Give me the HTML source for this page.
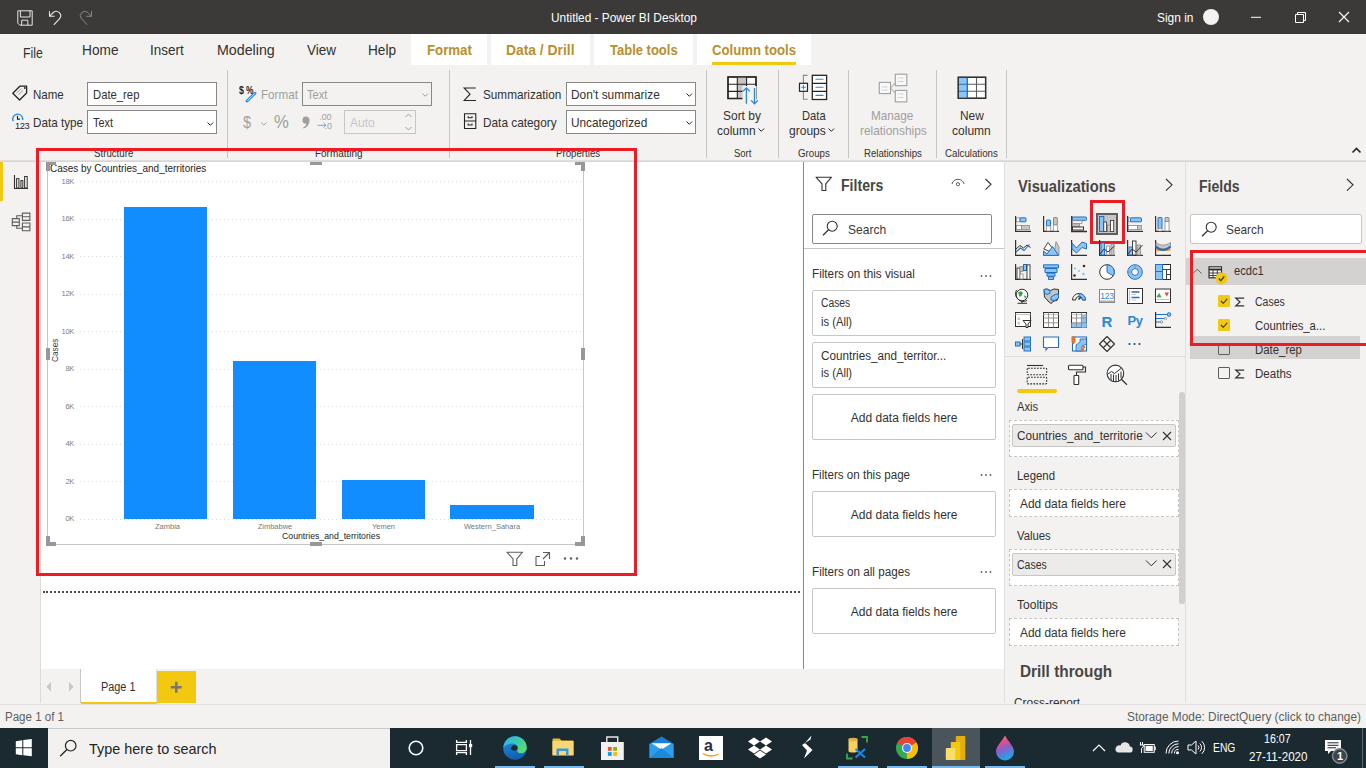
<!DOCTYPE html>
<html><head><meta charset="utf-8"><style>*{margin:0;padding:0;box-sizing:border-box}
html,body{width:1366px;height:768px;overflow:hidden;background:#fff;font-family:"Liberation Sans",sans-serif;color:#252423}
.a{position:absolute}
.t{position:absolute;white-space:nowrap;line-height:1;transform-origin:0 0}
svg{position:absolute;overflow:visible}
</style></head><body>
<div class="a" style="left:0px;top:0px;width:1366px;height:34px;background:#3b3a39;"></div>
<div class="a" style="left:0px;top:34px;width:1366px;height:127px;background:#f3f2f1;"></div>
<div class="a" style="left:411px;top:34px;width:76px;height:31px;background:#fff;"></div>
<div class="a" style="left:491px;top:34px;width:99px;height:31px;background:#fff;"></div>
<div class="a" style="left:594px;top:34px;width:99px;height:31px;background:#fff;"></div>
<div class="a" style="left:697px;top:34px;width:114px;height:31px;background:#fff;"></div>
<div class="a" style="left:712px;top:62px;width:84px;height:3px;background:#f2c811;"></div>
<div class="a" style="left:0px;top:160px;width:1366px;height:1px;background:repeating-linear-gradient(90deg,#dddbd9 0 2px,#e6e4e2 2px 3px);"></div>
<div class="a" style="left:0px;top:161px;width:1366px;height:1px;background:#d8d6d4;"></div>
<div class="a" style="left:0px;top:162px;width:40px;height:541px;background:#f3f2f1;"></div>
<div class="a" style="left:40px;top:162px;width:1px;height:542px;background:#dddbd9;"></div>
<div class="a" style="left:0px;top:162px;width:3px;height:39px;background:#f2c811;"></div>
<div class="a" style="left:41px;top:162px;width:762px;height:507px;background:#fff;"></div>
<div class="a" style="left:41px;top:669px;width:763px;height:34px;background:#f3f2f1;"></div>
<div class="a" style="left:0px;top:668px;width:1366px;height:0px;"></div>
<div class="a" style="left:803px;top:162px;width:201px;height:507px;background:#fff;"></div>
<div class="a" style="left:803px;top:162px;width:1px;height:507px;background:#8a8886;"></div>
<div class="a" style="left:804px;top:669px;width:200px;height:34px;background:#f3f2f1;"></div>
<div class="a" style="left:1004px;top:162px;width:181px;height:541px;background:#f3f2f1;"></div>
<div class="a" style="left:1004px;top:162px;width:1px;height:541px;background:#e1dfdd;"></div>
<div class="a" style="left:1185px;top:162px;width:181px;height:541px;background:#f3f2f1;"></div>
<div class="a" style="left:1185px;top:162px;width:1px;height:541px;background:#e1dfdd;"></div>
<div class="a" style="left:0px;top:703px;width:1366px;height:25px;background:#f3f2f1;"></div>
<div class="a" style="left:0px;top:704px;width:1366px;height:1px;background:#e1dfdd;"></div>
<div class="a" style="left:0px;top:728px;width:1366px;height:40px;background:#1b2a30;"></div>
<div class="a" style="left:48px;top:728px;width:342px;height:40px;background:#f2f1f0;"></div>
<div class="a" style="left:48px;top:728px;width:342px;height:1px;background:#c8c8c8;"></div>
<div class="t" style="left:550.5px;top:11.64px;font-size:12px;color:#ffffff;transform:scaleX(0.990);">Untitled - Power BI Desktop</div>
<div class="t" style="left:1156.5px;top:11.64px;font-size:12px;color:#ffffff;transform:scaleX(0.994);">Sign in</div>
<div class="a" style="left:1203px;top:9px;width:16px;height:16px;border-radius:50%;background:#f3f2f1"></div>
<div class="t" style="left:22.8px;top:45.95px;font-size:14px;color:#323130;transform:scaleX(0.878);">File</div>
<div class="t" style="left:81.5px;top:43.15px;font-size:14px;color:#323130;transform:scaleX(0.977);">Home</div>
<div class="t" style="left:150.0px;top:43.15px;font-size:14px;color:#323130;transform:scaleX(0.962);">Insert</div>
<div class="t" style="left:216.6px;top:43.15px;font-size:14px;color:#323130;transform:scaleX(1.017);">Modeling</div>
<div class="t" style="left:307.0px;top:43.15px;font-size:14px;color:#323130;transform:scaleX(0.964);">View</div>
<div class="t" style="left:367.5px;top:43.15px;font-size:14px;color:#323130;transform:scaleX(0.972);">Help</div>
<div class="t" style="left:426.6px;top:43.15px;font-size:14px;color:#b8902e;font-weight:700;transform:scaleX(0.946);">Format</div>
<div class="t" style="left:506.0px;top:43.15px;font-size:14px;color:#b8902e;font-weight:700;transform:scaleX(0.989);">Data / Drill</div>
<div class="t" style="left:609.5px;top:43.15px;font-size:14px;color:#b8902e;font-weight:700;transform:scaleX(0.928);">Table tools</div>
<div class="t" style="left:712.0px;top:43.15px;font-size:14px;color:#b8902e;font-weight:700;transform:scaleX(0.939);">Column tools</div>
<div class="a" style="left:227px;top:70px;width:1px;height:88px;background:#c8c6c4;"></div>
<div class="a" style="left:449px;top:70px;width:1px;height:88px;background:#c8c6c4;"></div>
<div class="a" style="left:706px;top:70px;width:1px;height:88px;background:#c8c6c4;"></div>
<div class="a" style="left:778px;top:70px;width:1px;height:88px;background:#c8c6c4;"></div>
<div class="a" style="left:848px;top:70px;width:1px;height:88px;background:#c8c6c4;"></div>
<div class="a" style="left:936px;top:70px;width:1px;height:88px;background:#c8c6c4;"></div>
<div class="a" style="left:1006px;top:70px;width:1px;height:88px;background:#c8c6c4;"></div>
<div class="t" style="left:32.5px;top:87.90px;font-size:13px;color:#323130;transform:scaleX(0.888);">Name</div>
<div class="t" style="left:32.5px;top:116.40px;font-size:13px;color:#323130;transform:scaleX(0.900);">Data type</div>
<div class="a" style="left:87px;top:82px;width:130px;height:24px;background:#fff;border:1px solid #8a8886"></div>
<div class="t" style="left:92.8px;top:87.90px;font-size:13px;color:#323130;transform:scaleX(0.868);">Date_rep</div>
<div class="a" style="left:87px;top:110px;width:130px;height:24px;background:#fff;border:1px solid #8a8886"></div>
<div class="t" style="left:93.1px;top:116.40px;font-size:13px;color:#323130;transform:scaleX(0.835);">Text</div>
<div class="t" style="left:260.8px;top:87.90px;font-size:13px;color:#a19f9d;transform:scaleX(0.896);">Format</div>
<div class="a" style="left:302px;top:82px;width:130px;height:24px;border:1px solid #8a8886"></div>
<div class="t" style="left:307.3px;top:87.90px;font-size:13px;color:#a19f9d;transform:scaleX(0.851);">Text</div>
<div class="a" style="left:344px;top:110px;width:72px;height:24px;border:1px solid #c8c6c4"></div>
<div class="t" style="left:349.5px;top:116.40px;font-size:13px;color:#c8c6c4;transform:scaleX(0.927);">Auto</div>
<div class="t" style="left:482.6px;top:87.80px;font-size:13px;color:#323130;transform:scaleX(0.903);">Summarization</div>
<div class="t" style="left:482.6px;top:116.10px;font-size:13px;color:#323130;transform:scaleX(0.909);">Data category</div>
<div class="a" style="left:566px;top:82px;width:130px;height:24px;background:#fff;border:1px solid #8a8886"></div>
<div class="t" style="left:571.2px;top:87.80px;font-size:13px;color:#323130;transform:scaleX(0.914);">Don't summarize</div>
<div class="a" style="left:566px;top:110px;width:130px;height:24px;background:#fff;border:1px solid #8a8886"></div>
<div class="t" style="left:570.8px;top:116.10px;font-size:13px;color:#323130;transform:scaleX(0.909);">Uncategorized</div>
<div class="t" style="left:723.4px;top:108.50px;font-size:13px;color:#323130;transform:scaleX(0.920);">Sort by</div>
<div class="t" style="left:717.0px;top:124.40px;font-size:13px;color:#323130;transform:scaleX(0.921);">column</div>
<div class="t" style="left:801.7px;top:108.50px;font-size:13px;color:#323130;transform:scaleX(0.859);">Data</div>
<div class="t" style="left:789.2px;top:124.40px;font-size:13px;color:#323130;transform:scaleX(0.926);">groups</div>
<div class="t" style="left:871.4px;top:108.50px;font-size:13px;color:#a19f9d;transform:scaleX(0.902);">Manage</div>
<div class="t" style="left:859.6px;top:124.40px;font-size:13px;color:#a19f9d;transform:scaleX(0.914);">relationships</div>
<div class="t" style="left:959.9px;top:108.50px;font-size:13px;color:#323130;transform:scaleX(0.915);">New</div>
<div class="t" style="left:952.4px;top:124.40px;font-size:13px;color:#323130;transform:scaleX(0.926);">column</div>
<div class="t" style="left:94.0px;top:148.53px;font-size:10px;color:#323130;transform:scaleX(0.969);">Structure</div>
<div class="t" style="left:314.9px;top:148.53px;font-size:10px;color:#323130;transform:scaleX(0.994);">Formatting</div>
<div class="t" style="left:555.8px;top:148.53px;font-size:10px;color:#323130;transform:scaleX(0.968);">Properties</div>
<div class="t" style="left:733.6px;top:148.53px;font-size:10px;color:#323130;transform:scaleX(0.949);">Sort</div>
<div class="t" style="left:797.6px;top:148.53px;font-size:10px;color:#323130;transform:scaleX(0.970);">Groups</div>
<div class="t" style="left:863.9px;top:148.53px;font-size:10px;color:#323130;transform:scaleX(0.963);">Relationships</div>
<div class="t" style="left:945.0px;top:148.53px;font-size:10px;color:#323130;transform:scaleX(0.969);">Calculations</div>
<div class="t" style="left:50.4px;top:164.28px;font-size:10.3px;color:#252423;transform:scaleX(0.968);">Cases by Countries_and_territories</div>
<div class="a" style="left:80px;top:181px;width:502px;height:1px;background:repeating-linear-gradient(90deg,#dedede 0 1px,transparent 1px 4px);"></div>
<div class="t" style="left:40px;top:177.9px;width:34px;text-align:right;font-size:7.5px;color:#808080;letter-spacing:-0.3px">18K</div>
<div class="a" style="left:80px;top:219px;width:502px;height:1px;background:repeating-linear-gradient(90deg,#dedede 0 1px,transparent 1px 4px);"></div>
<div class="t" style="left:40px;top:215.4px;width:34px;text-align:right;font-size:7.5px;color:#808080;letter-spacing:-0.3px">16K</div>
<div class="a" style="left:80px;top:256px;width:502px;height:1px;background:repeating-linear-gradient(90deg,#dedede 0 1px,transparent 1px 4px);"></div>
<div class="t" style="left:40px;top:252.9px;width:34px;text-align:right;font-size:7.5px;color:#808080;letter-spacing:-0.3px">14K</div>
<div class="a" style="left:80px;top:294px;width:502px;height:1px;background:repeating-linear-gradient(90deg,#dedede 0 1px,transparent 1px 4px);"></div>
<div class="t" style="left:40px;top:290.4px;width:34px;text-align:right;font-size:7.5px;color:#808080;letter-spacing:-0.3px">12K</div>
<div class="a" style="left:80px;top:331px;width:502px;height:1px;background:repeating-linear-gradient(90deg,#dedede 0 1px,transparent 1px 4px);"></div>
<div class="t" style="left:40px;top:327.9px;width:34px;text-align:right;font-size:7.5px;color:#808080;letter-spacing:-0.3px">10K</div>
<div class="a" style="left:80px;top:369px;width:502px;height:1px;background:repeating-linear-gradient(90deg,#dedede 0 1px,transparent 1px 4px);"></div>
<div class="t" style="left:40px;top:365.4px;width:34px;text-align:right;font-size:7.5px;color:#808080;letter-spacing:-0.3px">8K</div>
<div class="a" style="left:80px;top:406px;width:502px;height:1px;background:repeating-linear-gradient(90deg,#dedede 0 1px,transparent 1px 4px);"></div>
<div class="t" style="left:40px;top:402.9px;width:34px;text-align:right;font-size:7.5px;color:#808080;letter-spacing:-0.3px">6K</div>
<div class="a" style="left:80px;top:444px;width:502px;height:1px;background:repeating-linear-gradient(90deg,#dedede 0 1px,transparent 1px 4px);"></div>
<div class="t" style="left:40px;top:440.4px;width:34px;text-align:right;font-size:7.5px;color:#808080;letter-spacing:-0.3px">4K</div>
<div class="a" style="left:80px;top:481px;width:502px;height:1px;background:repeating-linear-gradient(90deg,#dedede 0 1px,transparent 1px 4px);"></div>
<div class="t" style="left:40px;top:477.9px;width:34px;text-align:right;font-size:7.5px;color:#808080;letter-spacing:-0.3px">2K</div>
<div class="a" style="left:80px;top:519px;width:502px;height:1px;background:repeating-linear-gradient(90deg,#dedede 0 1px,transparent 1px 4px);"></div>
<div class="t" style="left:40px;top:515.4px;width:34px;text-align:right;font-size:7.5px;color:#808080;letter-spacing:-0.3px">0K</div>
<div class="a" style="left:124px;top:207px;width:83px;height:312px;background:#118dff;"></div>
<div class="a" style="left:233px;top:361px;width:83px;height:158px;background:#118dff;"></div>
<div class="a" style="left:342px;top:480px;width:83px;height:39px;background:#118dff;"></div>
<div class="a" style="left:450px;top:505px;width:84px;height:14px;background:#118dff;"></div>
<div class="t" style="left:117.5px;top:523px;width:100px;text-align:center;font-size:7.5px;color:#777">Zambia</div>
<div class="t" style="left:225px;top:523px;width:100px;text-align:center;font-size:7.5px;color:#777">Zimbabwe</div>
<div class="t" style="left:333.5px;top:523px;width:100px;text-align:center;font-size:7.5px;color:#777">Yemen</div>
<div class="t" style="left:442px;top:523px;width:100px;text-align:center;font-size:7.5px;color:#777">Western_Sahara</div>
<div class="t" style="left:281.6px;top:532.38px;font-size:9px;color:#252423;transform:scaleX(0.970);">Countries_and_territories</div>
<div class="t" style="left:51px;top:361.5px;font-size:9px;color:#3b3a39;transform:rotate(-90deg) scaleX(0.92);transform-origin:0 0">Cases</div>
<div class="a" style="left:47px;top:162px;width:1px;height:383px;background:#c8c6c4;"></div>
<div class="a" style="left:583px;top:162px;width:1px;height:383px;background:#c8c6c4;"></div>
<div class="a" style="left:47px;top:544px;width:537px;height:1px;background:#c8c6c4;"></div>
<div class="a" style="left:46px;top:162px;width:10px;height:3px;background:#999897;"></div>
<div class="a" style="left:46px;top:162px;width:4px;height:9px;background:#999897;"></div>
<div class="a" style="left:575px;top:162px;width:10px;height:3px;background:#999897;"></div>
<div class="a" style="left:581px;top:162px;width:4px;height:9px;background:#999897;"></div>
<div class="a" style="left:46px;top:542px;width:10px;height:4px;background:#999897;"></div>
<div class="a" style="left:46px;top:536px;width:4px;height:10px;background:#999897;"></div>
<div class="a" style="left:575px;top:542px;width:10px;height:4px;background:#999897;"></div>
<div class="a" style="left:581px;top:536px;width:4px;height:10px;background:#999897;"></div>
<div class="a" style="left:310px;top:162px;width:12px;height:3px;background:#999897;"></div>
<div class="a" style="left:310px;top:542px;width:12px;height:4px;background:#999897;"></div>
<div class="a" style="left:46px;top:348px;width:4px;height:12px;background:#999897;"></div>
<div class="a" style="left:581px;top:348px;width:4px;height:12px;background:#999897;"></div>
<div class="a" style="left:43px;top:591px;width:757px;height:2px;border-top:2px dotted #4a4948"></div>
<div class="a" style="left:36px;top:148px;width:601px;height:428px;border:3px solid #ed1c24"></div>
<div class="a" style="left:81px;top:669px;width:75px;height:34px;background:#fff;"></div>
<div class="a" style="left:80px;top:669px;width:1px;height:34px;background:#c8c6c4;"></div>
<div class="a" style="left:81px;top:702px;width:76px;height:2px;background:#f2c811;"></div>
<div class="a" style="left:156px;top:669px;width:1px;height:33px;background:#e1dfdd;"></div>
<div class="t" style="left:101.0px;top:681.24px;font-size:12px;color:#323130;transform:scaleX(0.907);">Page 1</div>
<div class="a" style="left:157px;top:671px;width:39px;height:32px;background:#f2c811;"></div>
<div class="t" style="left:5.0px;top:711.34px;font-size:12px;color:#605e5c;transform:scaleX(0.961);">Page 1 of 1</div>
<div class="t" style="left:1126.8px;top:711.04px;font-size:12px;color:#605e5c;transform:scaleX(0.988);">Storage Mode: DirectQuery (click to change)</div>
<div class="t" style="left:840.7px;top:177.76px;font-size:16px;color:#484644;font-weight:700;transform:scaleX(0.881);">Filters</div>
<div class="a" style="left:812px;top:214px;width:180px;height:30px;background:#fff;border:1px solid #8a8886;border-radius:2px"></div>
<div class="t" style="left:848.2px;top:222.80px;font-size:13px;color:#3b3a39;transform:scaleX(0.927);">Search</div>
<div class="a" style="left:804px;top:248px;width:200px;height:1px;background:#c8c6c4;"></div>
<div class="t" style="left:812.4px;top:267.64px;font-size:12px;color:#323130;transform:scaleX(0.976);">Filters on this visual</div>
<div class="a" style="left:812px;top:290px;width:184px;height:46px;background:#fff;border:1px solid #c8c6c4;border-radius:2px"></div>
<div class="a" style="left:812px;top:342px;width:184px;height:46px;background:#fff;border:1px solid #c8c6c4;border-radius:2px"></div>
<div class="a" style="left:812px;top:394px;width:184px;height:46px;background:#fff;border:1px solid #c8c6c4;border-radius:2px"></div>
<div class="t" style="left:821.4px;top:297.34px;font-size:12px;color:#323130;transform:scaleX(0.861);">Cases</div>
<div class="t" style="left:821.4px;top:315.84px;font-size:12px;color:#323130;transform:scaleX(0.933);">is (All)</div>
<div class="t" style="left:821.4px;top:349.64px;font-size:12px;color:#323130;transform:scaleX(0.973);">Countries_and_territor...</div>
<div class="t" style="left:821.4px;top:367.44px;font-size:12px;color:#323130;transform:scaleX(0.933);">is (All)</div>
<div class="t" style="left:850.8px;top:411.94px;font-size:12px;color:#323130;">Add data fields here</div>
<div class="t" style="left:812.4px;top:468.84px;font-size:12px;color:#323130;transform:scaleX(0.967);">Filters on this page</div>
<div class="a" style="left:812px;top:491px;width:184px;height:46px;background:#fff;border:1px solid #c8c6c4;border-radius:2px"></div>
<div class="t" style="left:850.8px;top:508.94px;font-size:12px;color:#323130;">Add data fields here</div>
<div class="t" style="left:812.4px;top:565.84px;font-size:12px;color:#323130;transform:scaleX(0.973);">Filters on all pages</div>
<div class="a" style="left:812px;top:588px;width:184px;height:46px;background:#fff;border:1px solid #c8c6c4;border-radius:2px"></div>
<div class="t" style="left:850.8px;top:605.94px;font-size:12px;color:#323130;">Add data fields here</div>
<div class="t" style="left:1017.8px;top:179.26px;font-size:16px;color:#484644;font-weight:700;transform:scaleX(0.919);">Visualizations</div>
<div class="a" style="left:1004px;top:356px;width:181px;height:1px;background:#e1dfdd;"></div>
<div class="a" style="left:1017px;top:389px;width:40px;height:4px;background:#f2c811;border-radius:2px"></div>
<div class="t" style="left:1017.3px;top:401.24px;font-size:12px;color:#323130;transform:scaleX(0.926);">Axis</div>
<div class="a" style="left:1009px;top:420px;width:170px;height:37px;background:#fff;border:1px dashed #c8c6c4"></div>
<div class="a" style="left:1012px;top:424px;width:164px;height:23px;background:#edebe9;border:1px solid #c8c6c4;border-radius:2px"></div>
<div class="t" style="left:1017.3px;top:430.24px;font-size:12px;color:#323130;transform:scaleX(0.976);">Countries_and_territorie</div>
<div class="t" style="left:1017.3px;top:469.84px;font-size:12px;color:#323130;transform:scaleX(0.949);">Legend</div>
<div class="a" style="left:1009px;top:489px;width:170px;height:28px;background:#fff;border:1px dashed #c8c6c4"></div>
<div class="t" style="left:1020.3px;top:498.24px;font-size:12px;color:#323130;transform:scaleX(0.992);">Add data fields here</div>
<div class="t" style="left:1017.3px;top:529.74px;font-size:12px;color:#323130;transform:scaleX(0.941);">Values</div>
<div class="a" style="left:1009px;top:549px;width:170px;height:37px;background:#fff;border:1px dashed #c8c6c4"></div>
<div class="a" style="left:1012px;top:553px;width:164px;height:23px;background:#edebe9;border:1px solid #c8c6c4;border-radius:2px"></div>
<div class="t" style="left:1017.3px;top:558.94px;font-size:12px;color:#323130;transform:scaleX(0.873);">Cases</div>
<div class="t" style="left:1017.3px;top:599.04px;font-size:12px;color:#323130;transform:scaleX(1.005);">Tooltips</div>
<div class="a" style="left:1009px;top:618px;width:170px;height:28px;background:#fff;border:1px dashed #c8c6c4"></div>
<div class="t" style="left:1020.3px;top:626.74px;font-size:12px;color:#323130;transform:scaleX(0.992);">Add data fields here</div>
<div class="t" style="left:1019.8px;top:663.96px;font-size:16px;color:#484644;font-weight:700;transform:scaleX(0.960);">Drill through</div>
<div class="t" style="left:1014.4px;top:696.84px;font-size:12px;color:#323130;transform:scaleX(0.990);clip-path:inset(0 0 4.9px 0);">Cross-report</div>
<div class="a" style="left:1179px;top:392px;width:6px;height:212px;background:#d2d0ce;border-radius:3px 3px 2px 2px"></div>
<div class="t" style="left:1198.8px;top:179.46px;font-size:16px;color:#484644;font-weight:700;transform:scaleX(0.878);">Fields</div>
<div class="a" style="left:1190px;top:214px;width:172px;height:30px;background:#fff;border:1px solid #c8c6c4;border-radius:2px"></div>
<div class="t" style="left:1226.3px;top:223.40px;font-size:13px;color:#3b3a39;transform:scaleX(0.910);">Search</div>
<div class="a" style="left:1186px;top:258px;width:180px;height:27px;background:#d4d2d0;"></div>
<div class="t" style="left:1234.0px;top:264.84px;font-size:12px;color:#323130;transform:scaleX(0.930);">ecdc1</div>
<div class="a" style="left:1190px;top:336px;width:170px;height:23px;background:#d4d2d0;"></div>
<div class="t" style="left:1255.0px;top:296.14px;font-size:12px;color:#323130;transform:scaleX(0.873);">Cases</div>
<div class="t" style="left:1255.0px;top:320.14px;font-size:12px;color:#323130;transform:scaleX(0.941);">Countries_a...</div>
<div class="t" style="left:1255.0px;top:343.64px;font-size:12px;color:#323130;transform:scaleX(0.950);">Date_rep</div>
<div class="t" style="left:1255.0px;top:367.64px;font-size:12px;color:#323130;transform:scaleX(0.962);">Deaths</div>
<div class="a" style="left:1218px;top:295px;width:12px;height:12px;background:#f2c811;border-radius:1px"></div>
<div class="a" style="left:1218px;top:319px;width:12px;height:12px;background:#f2c811;border-radius:1px"></div>
<div class="a" style="left:1218px;top:343px;width:12px;height:12px;border:1px solid #605e5c;border-radius:1px"></div>
<div class="a" style="left:1218px;top:367px;width:12px;height:12px;border:1px solid #605e5c;border-radius:1px"></div>
<div class="a" style="left:1190px;top:250px;width:176px;height:96px;border:3px solid #ed1c24;border-right:none"></div>
<div class="a" style="left:1090px;top:200px;width:35px;height:44px;border:3px solid #ed1c24"></div>
<div class="t" style="left:88.5px;top:741.30px;font-size:15px;color:#252423;transform:scaleX(0.962);">Type here to search</div>
<div class="t" style="left:1213.2px;top:741.64px;font-size:12px;color:#ffffff;transform:scaleX(0.861);">ENG</div>
<div class="t" style="left:1264.4px;top:732.64px;font-size:12px;color:#ffffff;transform:scaleX(0.886);">16:07</div>
<div class="t" style="left:1248.7px;top:750.84px;font-size:12px;color:#ffffff;transform:scaleX(0.967);">27-11-2020</div>
<div class="a" style="left:932px;top:728px;width:48px;height:40px;background:#4a555b;"></div>
<div class="a" style="left:495px;top:766px;width:40px;height:2px;background:#76b9ed;"></div>
<div class="a" style="left:544px;top:766px;width:40px;height:2px;background:#76b9ed;"></div>
<div class="a" style="left:838px;top:766px;width:40px;height:2px;background:#76b9ed;"></div>
<div class="a" style="left:887px;top:766px;width:40px;height:2px;background:#76b9ed;"></div>
<div class="a" style="left:932px;top:766px;width:48px;height:2px;background:#76b9ed;"></div>
<div class="a" style="left:985px;top:766px;width:40px;height:2px;background:#76b9ed;"></div>
<svg style="left:17px;top:10px;" width="16" height="16" viewBox="0 0 16 16"><path d="M1.2 0.8H15.2V15.2H2.8L0.8 13.2V0.8Z M3.4 0.8V7H13V0.8 M4.7 15.2V10.2H10.8V15.2" fill="none" stroke="#e6e6e6" stroke-width="1"/></svg>
<svg style="left:48px;top:10px;" width="16" height="16" viewBox="0 0 16 16"><path d="M1.5 1.2V6.3H6.6 M1.5 6.3L5.3 2.5A4.4 4.4 0 0 1 11.6 8.6L5.8 14.8" fill="none" stroke="#e6e6e6" stroke-width="1.1"/></svg>
<svg style="left:77px;top:10px;" width="16" height="16" viewBox="0 0 16 16"><path d="M14.5 1.2V6.3H9.4 M14.5 6.3L10.7 2.5A4.4 4.4 0 0 0 4.4 8.6L10.2 14.8" fill="none" stroke="#8a8886" stroke-width="1"/></svg>
<svg style="left:1250px;top:10px;" width="14" height="14" viewBox="0 0 14 14"><path d="M1 7.3H11" stroke="#fff" stroke-width="1"/></svg>
<svg style="left:1294px;top:11px;" width="14" height="14" viewBox="0 0 14 14"><path d="M1.5 3.5H9.5V11.5H1.5Z M3.5 3.5V1.5H11.5V9.5H9.5" fill="none" stroke="#fff" stroke-width="1"/></svg>
<svg style="left:1338px;top:11px;" width="12" height="12" viewBox="0 0 12 12"><path d="M1 1L11 11M11 1L1 11" stroke="#fff" stroke-width="1.1"/></svg>
<svg style="left:11px;top:85px;" width="17" height="17" viewBox="0 0 17 17"><path d="M1.8 8.2L8.8 1.2H15.6V8L8.6 15Z" fill="none" stroke="#252423" stroke-width="1.3" stroke-linejoin="round"/><circle cx="13.8" cy="3" r="0.9" fill="#252423"/><path d="M5.5 8.2L10.5 3.6M7.2 9.9L12.2 5.3" stroke="#8a8886" stroke-width="0.8"/></svg>
<svg style="left:11px;top:112px;" width="20" height="20" viewBox="0 0 20 20"><path d="M2.2 9.3A5 5 0 1 1 11.6 8" fill="none" stroke="#2b88d8" stroke-width="1.4"/><path d="M6.5 3.7V7.2H9" fill="none" stroke="#252423" stroke-width="1.2"/></svg>
<div class="t" style="left:15px;top:122px;font-size:9.3px;color:#252423;letter-spacing:-0.4px;font-weight:400">123</div>
<div class="t" style="left:239.3px;top:85px;font-size:11px;font-weight:700;color:#252423;transform:scaleX(0.8);transform-origin:0 0">$</div>
<div class="t" style="left:246.2px;top:85.3px;font-size:10.5px;font-weight:700;color:#252423;transform:scaleX(0.8);transform-origin:0 0">%</div>
<svg style="left:245px;top:91px;" width="12" height="12" viewBox="0 0 12 12"><path d="M2 10L10 2.2" stroke="#2b88d8" stroke-width="2.8" stroke-linecap="round"/><path d="M2.2 9.8L9.8 2.4" stroke="#d8eafc" stroke-width="0.9"/></svg>
<div class="t" style="left:243px;top:113.5px;font-size:17px;color:#a19f9d;transform:scaleX(0.85);transform-origin:0 0">$</div>
<svg style="left:260px;top:121px;" width="8" height="6" viewBox="0 0 8 6"><path d="M1.2 1.5L3.8 4.1L6.4 1.5" fill="none" stroke="#a19f9d" stroke-width="1"/></svg>
<div class="t" style="left:274px;top:112.8px;font-size:18.5px;color:#a19f9d;transform:scaleX(0.9);transform-origin:0 0">%</div>
<svg style="left:302px;top:116px;" width="10" height="14" viewBox="0 0 10 14"><path d="M4 0.5A3.5 3.5 0 0 1 7.5 4.5C7.5 8.5 5 11.5 1.5 12.5L1 11.8C3 10.5 4 9.5 4.3 7.8A3.6 3.6 0 0 1 4 0.5Z" fill="#a19f9d"/></svg>
<div class="t" style="left:319.5px;top:113.3px;font-size:9px;color:#a19f9d;letter-spacing:-0.2px">.00</div>
<div class="t" style="left:324.8px;top:121.5px;font-size:9px;color:#a19f9d;letter-spacing:-0.2px">.0</div>
<svg style="left:317px;top:122px;" width="11" height="6" viewBox="0 0 11 6"><path d="M0.5 3.3H9M6.5 1L9 3.3L6.5 5.6" fill="none" stroke="#6fa8dc" stroke-width="1"/></svg>
<svg style="left:206px;top:121px;" width="9" height="6" viewBox="0 0 9 6"><path d="M1.5 1.5L4.3 4.3L7.1 1.5" fill="none" stroke="#252423" stroke-width="1"/></svg>
<svg style="left:421px;top:92px;" width="9" height="6" viewBox="0 0 9 6"><path d="M1.5 1.5L4.3 4.3L7.1 1.5" fill="none" stroke="#a19f9d" stroke-width="1"/></svg>
<svg style="left:685px;top:92px;" width="9" height="6" viewBox="0 0 9 6"><path d="M1.5 1.5L4.3 4.3L7.1 1.5" fill="none" stroke="#252423" stroke-width="1"/></svg>
<svg style="left:685px;top:120px;" width="9" height="6" viewBox="0 0 9 6"><path d="M1.5 1.5L4.3 4.3L7.1 1.5" fill="none" stroke="#252423" stroke-width="1"/></svg>
<svg style="left:404px;top:112px;" width="9" height="20" viewBox="0 0 9 20"><path d="M1.5 5L4.5 2L7.5 5M1.5 15L4.5 18L7.5 15" fill="none" stroke="#a19f9d" stroke-width="1"/></svg>
<svg style="left:463px;top:87px;" width="14" height="15" viewBox="0 0 14 15"><path d="M12.8 1H1.2L7 7.2L1.2 13.5H13" fill="none" stroke="#252423" stroke-width="1.1" stroke-linejoin="miter"/></svg>
<svg style="left:463px;top:113px;" width="14" height="17" viewBox="0 0 14 17"><path d="M1.5 0.8H12.8V15.5H1.5Z M1.5 8H12.8 M5.2 3.3V4.8H9V3.3 M5.2 10.5V12H9V10.5" fill="none" stroke="#252423" stroke-width="1.1"/></svg>
<svg style="left:727px;top:76px;" width="32" height="29" viewBox="0 0 32 29"><rect x="1" y="1" width="28" height="21.5" fill="#fff" stroke="#252423" stroke-width="1.3"/>
<rect x="10.3" y="1" width="9.3" height="21.5" fill="#c8c6c4"/>
<path d="M10.3 1V22.5M19.6 1V22.5M1 8.2H29M1 15.4H29" stroke="#252423" stroke-width="1.1"/>
<rect x="1" y="1" width="28" height="21.5" fill="none" stroke="#252423" stroke-width="1.3"/>
<rect x="15.5" y="10" width="14" height="18" fill="#f3f2f1"/>
<path d="M19.4 12V27.8M16 15.3L19.4 11.9L22.8 15.3 M27.5 12V27.8M24.1 24.4L27.5 27.8L30.9 24.4" fill="none" stroke="#2b88d8" stroke-width="1.3"/></svg>
<svg style="left:757px;top:127px;" width="9" height="6" viewBox="0 0 9 6"><path d="M1.5 1.5L4.3 4.3L7.1 1.5" fill="none" stroke="#252423" stroke-width="1"/></svg>
<svg style="left:798px;top:74px;" width="31" height="27" viewBox="0 0 31 27"><path d="M9.6 1.4H5.4V25.2H9.6" fill="none" stroke="#8a8886" stroke-width="1.1"/>
<rect x="1.5" y="9.3" width="8" height="8" fill="#fff" stroke="#252423" stroke-width="1.2"/>
<path d="M5.5 11V15.6M3.2 13.3H7.8" stroke="#2b88d8" stroke-width="1.1"/>
<rect x="14.3" y="1.3" width="14.3" height="24.2" fill="#fff" stroke="#252423" stroke-width="1.3"/>
<path d="M14.3 9.4H28.6M14.3 17.4H28.6" stroke="#252423" stroke-width="1.1"/>
<path d="M17.5 5.3H25.5M17.5 13.3H25.5M17.5 21.4H25.5" stroke="#2b88d8" stroke-width="1.1"/></svg>
<svg style="left:827px;top:127px;" width="9" height="6" viewBox="0 0 9 6"><path d="M1.5 1.5L4.3 4.3L7.1 1.5" fill="none" stroke="#252423" stroke-width="1"/></svg>
<svg style="left:878px;top:73px;" width="30" height="30" viewBox="0 0 30 30"><rect x="1.3" y="9.4" width="11.2" height="11.2" fill="#f8f8f8" stroke="#a19f9d" stroke-width="1.1"/>
<rect x="17.3" y="1.2" width="11.5" height="11.5" fill="#f8f8f8" stroke="#a19f9d" stroke-width="1.1"/>
<rect x="17.3" y="17.4" width="11.5" height="11.5" fill="#f8f8f8" stroke="#a19f9d" stroke-width="1.1"/>
<path d="M12.5 15L17.3 10M12.5 15L17.3 20" stroke="#a19f9d" stroke-width="1"/>
<path d="M4 14H10M4 17H10M20 5H26M20 8.5H26M20 21H26M20 24.5H26" stroke="#a0b8cc" stroke-width="0.8" stroke-dasharray="1 0.5"/></svg>
<svg style="left:957px;top:76px;" width="30" height="24" viewBox="0 0 30 24"><rect x="1.3" y="1.3" width="27.3" height="21" fill="#fff" stroke="#323130" stroke-width="1.3"/>
<rect x="1.3" y="1.3" width="9" height="21" fill="#8cc4f5"/>
<path d="M10.3 1.3V22.3" stroke="#1f6fc5" stroke-width="1.3"/>
<path d="M1.3 8.3H10.3M1.3 15.3H10.3" stroke="#1f6fc5" stroke-width="1.1"/>
<path d="M10.3 8.3H28.6M10.3 15.3H28.6M19.5 1.3V22.3" stroke="#605e5c" stroke-width="1.1"/>
<rect x="1.3" y="1.3" width="27.3" height="21" fill="none" stroke="#323130" stroke-width="1.3"/></svg>
<svg style="left:1351px;top:146px;" width="12" height="8" viewBox="0 0 12 8"><path d="M1.5 6.5L5.5 2.5L9.5 6.5" fill="none" stroke="#252423" stroke-width="1.6"/></svg>
<svg style="left:1015px;top:216px;" width="16" height="16" viewBox="0 0 16 16"><path d="M0.6 0V15.4H16" fill="none" stroke="#323130" stroke-width="1.2"/><rect x="1.5" y="1.8" width="3.5" height="4" fill="#fff" stroke="#8a8886" stroke-width="0.8"/><rect x="5" y="1.8" width="6" height="4" rx="0.8" fill="#8cc4f5" stroke="#1f6fc5" stroke-width="1"/><rect x="1.5" y="9.5" width="5" height="4" fill="#fff" stroke="#8a8886" stroke-width="0.8"/><rect x="6.5" y="9.5" width="8" height="4" fill="#c8c6c4" stroke="#8a8886" stroke-width="0.8"/></svg>
<svg style="left:1043px;top:216px;" width="16" height="16" viewBox="0 0 16 16"><path d="M0.6 0V15.4H16" fill="none" stroke="#323130" stroke-width="1.2"/><rect x="3.5" y="4" width="4" height="6" rx="0.6" fill="#8cc4f5" stroke="#1f6fc5" stroke-width="1"/><rect x="3.5" y="10" width="4" height="5" fill="#fff" stroke="#8a8886" stroke-width="0.7"/><rect x="10.5" y="1.5" width="3.8" height="7.5" rx="0.6" fill="#c8c6c4" stroke="#8a8886" stroke-width="1"/><rect x="10.5" y="9" width="3.8" height="6" fill="#fff" stroke="#8a8886" stroke-width="0.7"/></svg>
<svg style="left:1071px;top:216px;" width="16" height="16" viewBox="0 0 16 16"><path d="M0.8 0V15.4H16" fill="none" stroke="#323130" stroke-width="1.5"/><rect x="1.5" y="1" width="14" height="3.3" rx="0.8" fill="#8cc4f5" stroke="#1f6fc5" stroke-width="1"/><rect x="1.5" y="4.8" width="9.5" height="2.5" fill="#fff" stroke="#8a8886" stroke-width="0.8"/><rect x="1.5" y="7.8" width="7" height="2.5" fill="#c8c6c4" stroke="#8a8886" stroke-width="0.8"/><rect x="1.5" y="11" width="11" height="3" fill="#fff" stroke="#323130" stroke-width="1"/></svg>
<svg style="left:1127px;top:216px;" width="16" height="16" viewBox="0 0 16 16"><path d="M0.6 0V15.4H16" fill="none" stroke="#323130" stroke-width="1.2"/><rect x="1.5" y="1.8" width="2" height="4" fill="#fff" stroke="#8a8886" stroke-width="0.8"/><rect x="3.5" y="1.8" width="11" height="4" rx="0.8" fill="#8cc4f5" stroke="#1f6fc5" stroke-width="1"/><rect x="1.5" y="9.5" width="9" height="4" fill="#fff" stroke="#8a8886" stroke-width="0.8"/><rect x="10.5" y="9.5" width="4" height="4" fill="#c8c6c4" stroke="#8a8886" stroke-width="0.8"/></svg>
<svg style="left:1155px;top:216px;" width="16" height="16" viewBox="0 0 16 16"><path d="M0.6 0V15.4H16" fill="none" stroke="#323130" stroke-width="1.2"/><rect x="3" y="1.5" width="4" height="11" rx="0.6" fill="#8cc4f5" stroke="#1f6fc5" stroke-width="1"/><rect x="3" y="12.5" width="4" height="2.5" fill="#fff" stroke="#8a8886" stroke-width="0.7"/><rect x="10" y="1.5" width="4" height="4" rx="0.6" fill="#c8c6c4" stroke="#8a8886" stroke-width="1"/><rect x="10" y="5.5" width="4" height="9.5" fill="#fff" stroke="#8a8886" stroke-width="0.8"/></svg>
<svg style="left:1015px;top:240px;" width="16" height="16" viewBox="0 0 16 16"><path d="M0.6 0V15.4H16" fill="none" stroke="#323130" stroke-width="1.2"/><path d="M1 9L5 5.5L8.5 8L12 5L15.5 7.5" fill="none" stroke="#323130" stroke-width="1"/><path d="M1 12L5.5 8L9 10.5L14.5 4.5" fill="none" stroke="#1f6fc5" stroke-width="1.1"/></svg>
<svg style="left:1043px;top:240px;" width="16" height="16" viewBox="0 0 16 16"><path d="M0.5 15.4H16" stroke="#1f6fc5" stroke-width="1"/><path d="M11 15.4L13 1.5L16 7V15.4Z" fill="#c8c6c4" stroke="#8a8886" stroke-width="0.8"/><path d="M0.8 9L5 2.5L10 9L7 11.5Z" fill="#fff" stroke="#323130" stroke-width="0.9"/><path d="M0.5 15.4V11L4 14L9.5 6.5L15.5 15.4Z" fill="#8cc4f5" stroke="#1f6fc5" stroke-width="1"/></svg>
<svg style="left:1071px;top:240px;" width="16" height="16" viewBox="0 0 16 16"><path d="M0.6 0V15.4H16" fill="none" stroke="#323130" stroke-width="1.2"/><path d="M1 3L5.5 8L11 2L15.5 3.5V9L11 7.5L5.5 13L1 9Z" fill="#8cc4f5" stroke="#1f6fc5" stroke-width="1"/></svg>
<svg style="left:1099px;top:240px;" width="16" height="16" viewBox="0 0 16 16"><path d="M0.6 0V15.4H16" fill="none" stroke="#323130" stroke-width="1.2"/><rect x="2" y="3" width="3.5" height="12" fill="#8cc4f5" stroke="#1f6fc5" stroke-width="0.9"/><rect x="7.5" y="6" width="3" height="9" fill="#fff" stroke="#8a8886" stroke-width="0.8"/><rect x="12" y="4" width="3" height="11" fill="#c8c6c4" stroke="#8a8886" stroke-width="0.8"/><path d="M1 14L5 9L9 12L15.5 6" fill="none" stroke="#323130" stroke-width="1"/></svg>
<svg style="left:1127px;top:240px;" width="16" height="16" viewBox="0 0 16 16"><path d="M0.6 0V15.4H16" fill="none" stroke="#323130" stroke-width="1.2"/><rect x="2" y="7" width="3.5" height="8" fill="#8cc4f5" stroke="#1f6fc5" stroke-width="0.9"/><rect x="5.5" y="1" width="3.5" height="14" fill="#fff" stroke="#323130" stroke-width="0.9"/><rect x="10" y="5" width="3.5" height="10" fill="#c8c6c4" stroke="#8a8886" stroke-width="0.8"/><path d="M1 14L5 9L9 12L15.5 5" fill="none" stroke="#323130" stroke-width="1"/></svg>
<svg style="left:1155px;top:240px;" width="16" height="16" viewBox="0 0 16 16"><path d="M0.6 0V15.4H16" fill="none" stroke="#323130" stroke-width="1.2"/><path d="M1 2.5C5 6 11 6 15.5 2.5V7C11 10 5 10 1 7Z" fill="#c8c6c4" stroke="#8a8886" stroke-width="0.8"/><path d="M1 8H15.5V11H1Z" fill="#f7a24b"/><path d="M1 6.5C5 11 11 11 15.5 6.5" fill="none" stroke="#1f6fc5" stroke-width="2.2"/></svg>
<svg style="left:1015px;top:264px;" width="16" height="16" viewBox="0 0 16 16"><path d="M0.6 0V15.4H16" fill="none" stroke="#323130" stroke-width="1.2"/><rect x="2" y="4" width="3" height="11" fill="#fff" stroke="#323130" stroke-width="0.9"/><rect x="5" y="2.5" width="3" height="5" fill="#c8c6c4" stroke="#8a8886" stroke-width="0.8"/><rect x="8.5" y="0.5" width="3" height="6" fill="#8cc4f5" stroke="#1f6fc5" stroke-width="1"/><rect x="12" y="0.8" width="3" height="14.5" fill="#fff" stroke="#323130" stroke-width="0.9"/><rect x="5" y="10" width="3" height="5" fill="#fff" stroke="#8a8886" stroke-width="0.8"/></svg>
<svg style="left:1043px;top:264px;" width="16" height="16" viewBox="0 0 16 16"><path d="M0.5 0.8H15.5V3.8H0.5Z M2 4.5H14V8.5H2Z M4 9.2H12V12.2H4Z M5.5 12.8H10.5V15.5H5.5Z" fill="#8cc4f5" stroke="#1f6fc5" stroke-width="1"/></svg>
<svg style="left:1071px;top:264px;" width="16" height="16" viewBox="0 0 16 16"><path d="M0.6 0V15.4H16" fill="none" stroke="#323130" stroke-width="1.2"/><circle cx="13" cy="2" r="1.3" fill="#323130"/><circle cx="4" cy="4.5" r="1.1" fill="#8cc4f5"/><circle cx="8" cy="7" r="1.1" fill="#8cc4f5"/><circle cx="12.5" cy="10" r="1.3" fill="#8cc4f5"/><circle cx="3.5" cy="11.5" r="1.3" fill="#323130"/></svg>
<svg style="left:1099px;top:264px;" width="16" height="16" viewBox="0 0 16 16"><circle cx="8" cy="8" r="7.3" fill="#fff" stroke="#323130" stroke-width="1"/><path d="M8 0.7A7.3 7.3 0 0 1 14.2 11.9L8 8Z" fill="#8cc4f5" stroke="#1f6fc5" stroke-width="1"/></svg>
<svg style="left:1127px;top:264px;" width="16" height="16" viewBox="0 0 16 16"><circle cx="8" cy="8" r="5.3" fill="none" stroke="#8cc4f5" stroke-width="3.6"/><circle cx="8" cy="8" r="7.3" fill="none" stroke="#1f6fc5" stroke-width="1"/><circle cx="8" cy="8" r="3.4" fill="#fff" stroke="#1f6fc5" stroke-width="1"/><path d="M8 0.7V4.6M0.7 8H4.6" stroke="#8a8886" stroke-width="0.8"/></svg>
<svg style="left:1155px;top:264px;" width="16" height="16" viewBox="0 0 16 16"><rect x="0.5" y="0.5" width="15" height="15" fill="#fff" stroke="#323130" stroke-width="1"/><rect x="0.5" y="0.5" width="7" height="7" fill="#8cc4f5" stroke="#1f6fc5" stroke-width="1"/><rect x="0.5" y="7.5" width="7" height="8" fill="#8cc4f5" stroke="#1f6fc5" stroke-width="1"/><path d="M7.5 5.5H15.5M11.5 5.5V15.5M11.5 10.5H15.5" stroke="#323130" stroke-width="0.9"/></svg>
<svg style="left:1015px;top:288px;" width="16" height="16" viewBox="0 0 16 16"><circle cx="7" cy="7" r="5.8" fill="#fff" stroke="#323130" stroke-width="1"/><path d="M3 4.5L6 3L8 5L6.5 8L4.5 9ZM9 7.5L11.5 8L10 11Z" fill="#3aa64a"/><path d="M1.5 2A7.8 7.8 0 0 0 12 12.5M7 13V15.3M2.5 15.3H12" fill="none" stroke="#323130" stroke-width="1"/></svg>
<svg style="left:1043px;top:288px;" width="16" height="16" viewBox="0 0 16 16"><path d="M1 1.5L4 1L7.5 2.5L11 1L15.5 1.5V9L14 12.5L11 13L8 15.5L5 13L1.5 9Z" fill="#c8c6c4" stroke="#323130" stroke-width="1"/><path d="M1 1.5L4 1L7 3V5.5L4 6.5L1.5 5Z M8 9L12 6.5L15.5 6V10L12 12.5L8 12Z" fill="#8cc4f5" stroke="#1f6fc5" stroke-width="1"/></svg>
<svg style="left:1071px;top:288px;" width="16" height="16" viewBox="0 0 16 16"><path d="M1.5 12A6.5 6.5 0 0 1 14.5 12H11.5A3.5 3.5 0 0 0 4.5 12Z" fill="#fff" stroke="#323130" stroke-width="1"/><path d="M8 5.5A6.5 6.5 0 0 1 14.5 12H11.5A3.5 3.5 0 0 0 8 8.5Z" fill="#8cc4f5" stroke="#1f6fc5" stroke-width="1"/><path d="M7.5 11.5L10 9" stroke="#323130" stroke-width="1.6"/></svg>
<svg style="left:1099px;top:288px;" width="16" height="16" viewBox="0 0 16 16"><rect x="0.5" y="1.5" width="15" height="13" fill="#fff" stroke="#8a8886" stroke-width="1"/><path d="M0.5 13.2H15.5" stroke="#8a8886" stroke-width="1"/><text x="8" y="10.8" font-size="8.5" text-anchor="middle" fill="#2b88d8" font-family="Liberation Sans" letter-spacing="-0.3">123</text></svg>
<svg style="left:1127px;top:288px;" width="16" height="16" viewBox="0 0 16 16"><rect x="0.5" y="0.5" width="15" height="15" fill="#fff" stroke="#323130" stroke-width="1"/><path d="M2.5 2V14" stroke="#c8c6c4" stroke-width="1.3"/><path d="M4.5 4H12.5M4.5 9.5H12.5" stroke="#1f6fc5" stroke-width="1.3"/><path d="M4.5 6.5H9M4.5 12H9" stroke="#c8c6c4" stroke-width="1"/></svg>
<svg style="left:1155px;top:288px;" width="16" height="16" viewBox="0 0 16 16"><rect x="0.5" y="1" width="15" height="13.5" fill="#fff" stroke="#323130" stroke-width="1"/><path d="M2 9L4 5.5L6 9Z" fill="#5bb75b" stroke="#2e7d32" stroke-width="0.6"/><path d="M9.5 4.5H14L11.8 8.5Z" fill="#e74c3c"/><path d="M1.5 11.5H14.5" stroke="#c8c6c4" stroke-width="1"/></svg>
<svg style="left:1015px;top:312px;" width="16" height="16" viewBox="0 0 16 16"><rect x="0.5" y="0.5" width="15" height="14" fill="#fff" stroke="#323130" stroke-width="1"/><path d="M0.5 2.5H15.5" stroke="#c8c6c4" stroke-width="1.2"/><rect x="2.5" y="5.5" width="2.5" height="2.5" fill="#c8c6c4"/><rect x="2.5" y="10" width="2.5" height="2.5" fill="#c8c6c4"/><path d="M8 8.5H16L13 12V15.5H11V12Z" fill="#fff" stroke="#323130" stroke-width="1"/></svg>
<svg style="left:1043px;top:312px;" width="16" height="16" viewBox="0 0 16 16"><rect x="0.5" y="0.5" width="15" height="15" fill="#fff" stroke="#323130" stroke-width="1"/><path d="M0.5 2.5H15.5" stroke="#c8c6c4" stroke-width="1.2"/><path d="M5.5 0.5V15.5M10.5 0.5V15.5M0.5 6H15.5M0.5 10.8H15.5" stroke="#8a8886" stroke-width="0.9"/></svg>
<svg style="left:1071px;top:312px;" width="16" height="16" viewBox="0 0 16 16"><rect x="0.5" y="0.5" width="15" height="15" fill="#fff" stroke="#323130" stroke-width="1"/><rect x="11" y="3" width="4.5" height="12.5" fill="#8cc4f5"/><rect x="0.5" y="11" width="15" height="4.5" fill="#8cc4f5"/><path d="M0.5 2.5H15.5" stroke="#c8c6c4" stroke-width="1.2"/><path d="M5.5 0.5V15.5M10.5 0.5V15.5M0.5 6H15.5M0.5 10.8H15.5" stroke="#8a8886" stroke-width="0.9"/></svg>
<svg style="left:1099px;top:312px;" width="16" height="16" viewBox="0 0 16 16"><text x="8" y="15" font-size="15" font-weight="700" text-anchor="middle" fill="#2b88d8" font-family="Liberation Sans">R</text></svg>
<svg style="left:1127px;top:312px;" width="16" height="16" viewBox="0 0 16 16"><text x="8" y="13" font-size="13" font-weight="700" text-anchor="middle" fill="#2b88d8" font-family="Liberation Sans" letter-spacing="-0.5">Py</text></svg>
<svg style="left:1155px;top:312px;" width="16" height="16" viewBox="0 0 16 16"><path d="M0.6 0V15.4H16" fill="none" stroke="#323130" stroke-width="1.2"/><path d="M1 2.5H13M1 6.5H10M1 10H6" stroke="#1f6fc5" stroke-width="1"/><circle cx="14" cy="2.5" r="1.8" fill="#8cc4f5" stroke="#1f6fc5" stroke-width="1"/><circle cx="10.5" cy="6.5" r="1.2" fill="#fff" stroke="#8a8886" stroke-width="0.9"/><circle cx="6.5" cy="10" r="1.2" fill="#fff" stroke="#8a8886" stroke-width="0.9"/></svg>
<svg style="left:1015px;top:336px;" width="16" height="16" viewBox="0 0 16 16"><rect x="0.5" y="6" width="4.5" height="4" fill="#8cc4f5" stroke="#1f6fc5" stroke-width="1"/><path d="M5 8H7.5M7.5 3V13" stroke="#323130" stroke-width="1"/><rect x="9" y="1" width="6.5" height="4" fill="#8cc4f5" stroke="#1f6fc5" stroke-width="1"/><rect x="9" y="6" width="6.5" height="4" fill="#8cc4f5" stroke="#1f6fc5" stroke-width="1"/><rect x="9" y="11" width="6.5" height="4" fill="#8cc4f5" stroke="#1f6fc5" stroke-width="1"/></svg>
<svg style="left:1043px;top:336px;" width="16" height="16" viewBox="0 0 16 16"><path d="M0.5 1H15.5V11.5H5L3 14V11.5H0.5Z" fill="#fff" stroke="#1f6fc5" stroke-width="1.1"/></svg>
<svg style="left:1071px;top:336px;" width="16" height="16" viewBox="0 0 16 16"><rect x="1.5" y="1" width="14" height="14" fill="#fff" stroke="#1f6fc5" stroke-width="1.1"/><path d="M5 15V9L9 6V3H15.5V8L11 10V15Z" fill="#8cc4f5" stroke="#1f6fc5" stroke-width="0.9"/><path d="M0.5 0.5H4.5V6L2.5 8.5L0.5 6Z" fill="#e8722a"/><circle cx="13" cy="11" r="1.3" fill="#e8722a"/><circle cx="11.5" cy="13.8" r="1.8" fill="#e8722a"/></svg>
<svg style="left:1099px;top:336px;" width="16" height="16" viewBox="0 0 16 16"><path d="M8 0.5L15.5 8L8 15.5L0.5 8Z M4.5 4.5L11.5 11.5M11.5 4.5L4.5 11.5" fill="none" stroke="#323130" stroke-width="1.1" stroke-linejoin="round"/></svg>
<svg style="left:1127px;top:336px;" width="16" height="16" viewBox="0 0 16 16"><circle cx="2.5" cy="8" r="1.1" fill="#1a4f8a"/><circle cx="7.5" cy="8" r="1.1" fill="#1a4f8a"/><circle cx="12.5" cy="8" r="1.1" fill="#1a4f8a"/></svg>
<svg style="left:1096px;top:213px;" width="22" height="22" viewBox="0 0 22 22"><rect x="1" y="1" width="20" height="20" fill="#c8c6c4" stroke="#605e5c" stroke-width="2"/><path d="M3.6 3V18.4H19" fill="none" stroke="#8a8886" stroke-width="0.8" stroke-dasharray="1 0.6"/><rect x="3.5" y="3.5" width="4.3" height="15" fill="#8cc4f5" stroke="#1f6fc5" stroke-width="1"/><rect x="7.8" y="9" width="2.8" height="9.5" fill="#fff" stroke="#323130" stroke-width="0.8"/><rect x="11.5" y="12" width="3" height="6.5" fill="#c8c6c4" stroke="#8a8886" stroke-width="0.8"/><rect x="14.5" y="7.5" width="3.2" height="11" fill="#fff" stroke="#323130" stroke-width="0.8"/></svg>
<svg style="left:1026px;top:364px;" width="22" height="22" viewBox="0 0 22 22"><path d="M1 1.5H17" stroke="#323130" stroke-width="1.1"/><rect x="1.2" y="4.3" width="19.5" height="6.5" rx="0.8" fill="none" stroke="#323130" stroke-width="1.1" stroke-dasharray="1.8 1.2"/><rect x="1.2" y="13.3" width="19.5" height="6.6" rx="0.8" fill="none" stroke="#323130" stroke-width="1.1" stroke-dasharray="1.8 1.2"/></svg>
<svg style="left:1067px;top:364px;" width="20" height="22" viewBox="0 0 20 22"><rect x="1.5" y="1.2" width="14.5" height="4.5" rx="1" fill="#fff" stroke="#323130" stroke-width="1.1"/><path d="M16 3H18.5V8H9.5V11.5" fill="none" stroke="#323130" stroke-width="1.1"/><rect x="7" y="11.5" width="4.7" height="9" rx="0.5" fill="#fff" stroke="#323130" stroke-width="1.1"/></svg>
<svg style="left:1105px;top:363px;" width="24" height="24" viewBox="0 0 24 24"><circle cx="10.4" cy="10.4" r="8.3" fill="#fff" stroke="#323130" stroke-width="1.1"/><path d="M3 11L6.5 8.5L9.5 10.5L16 5.5" fill="none" stroke="#323130" stroke-width="1"/><path d="M6 11V17M8.5 11.5V18.5M11 12V18.5M13.5 10.5V17.5M16 8.5V15" stroke="#323130" stroke-width="1"/><path d="M16.3 16.3L22 21.8" stroke="#323130" stroke-width="1.2"/></svg>
<svg style="left:1164px;top:178px;" width="10" height="14" viewBox="0 0 10 14"><path d="M2 1L8 6.8L2 12.6" fill="none" stroke="#323130" stroke-width="1.1"/></svg>
<svg style="left:1145px;top:431px;" width="13" height="9" viewBox="0 0 13 9"><path d="M1 1.5L6.3 6.8L11.6 1.5" fill="none" stroke="#323130" stroke-width="1"/></svg>
<svg style="left:1162px;top:431px;" width="10" height="10" viewBox="0 0 10 10"><path d="M1 1L9 9M9 1L1 9" stroke="#323130" stroke-width="1.1"/></svg>
<svg style="left:1145px;top:559px;" width="13" height="9" viewBox="0 0 13 9"><path d="M1 1.5L6.3 6.8L11.6 1.5" fill="none" stroke="#323130" stroke-width="1"/></svg>
<svg style="left:1162px;top:559px;" width="10" height="10" viewBox="0 0 10 10"><path d="M1 1L9 9M9 1L1 9" stroke="#323130" stroke-width="1.1"/></svg>
<svg style="left:815px;top:176px;" width="18" height="16" viewBox="0 0 18 16"><path d="M1 1.2H16.5L10.8 7.8V14.5H7V7.8Z" fill="none" stroke="#323130" stroke-width="1.1" stroke-linejoin="round"/></svg>
<svg style="left:951px;top:178px;" width="14" height="9" viewBox="0 0 14 9"><path d="M1 6A6.2 6.2 0 0 1 13 6" fill="none" stroke="#605e5c" stroke-width="1"/><circle cx="7" cy="6.2" r="1.6" fill="none" stroke="#605e5c" stroke-width="1"/></svg>
<svg style="left:984px;top:178px;" width="9" height="13" viewBox="0 0 9 13"><path d="M1.5 1L7 6.3L1.5 11.6" fill="none" stroke="#323130" stroke-width="1.1"/></svg>
<svg style="left:822px;top:220px;" width="18" height="18" viewBox="0 0 18 18"><circle cx="10.2" cy="6.2" r="5" fill="none" stroke="#323130" stroke-width="1.1"/><path d="M6.6 9.8L1 15.3" stroke="#323130" stroke-width="1.2"/></svg>
<svg style="left:1201px;top:221px;" width="18" height="18" viewBox="0 0 18 18"><circle cx="10.2" cy="6.2" r="5" fill="none" stroke="#323130" stroke-width="1.1"/><path d="M6.6 9.8L1 15.3" stroke="#323130" stroke-width="1.2"/></svg>
<svg style="left:980px;top:274px;" width="13" height="4" viewBox="0 0 13 4"><circle cx="1.5" cy="2" r="0.9" fill="#605e5c"/><circle cx="6" cy="2" r="0.9" fill="#605e5c"/><circle cx="10.5" cy="2" r="0.9" fill="#605e5c"/></svg>
<svg style="left:980px;top:473px;" width="13" height="4" viewBox="0 0 13 4"><circle cx="1.5" cy="2" r="0.9" fill="#605e5c"/><circle cx="6" cy="2" r="0.9" fill="#605e5c"/><circle cx="10.5" cy="2" r="0.9" fill="#605e5c"/></svg>
<svg style="left:980px;top:570px;" width="13" height="4" viewBox="0 0 13 4"><circle cx="1.5" cy="2" r="0.9" fill="#605e5c"/><circle cx="6" cy="2" r="0.9" fill="#605e5c"/><circle cx="10.5" cy="2" r="0.9" fill="#605e5c"/></svg>
<svg style="left:1345px;top:178px;" width="10" height="14" viewBox="0 0 10 14"><path d="M2 1L8 6.8L2 12.6" fill="none" stroke="#323130" stroke-width="1.1"/></svg>
<svg style="left:1192px;top:266px;" width="12" height="10" viewBox="0 0 12 10"><path d="M1 7.5L5.3 3.2L9.6 7.5" fill="none" stroke="#605e5c" stroke-width="1"/></svg>
<svg style="left:1208px;top:266px;" width="16" height="14" viewBox="0 0 16 14"><rect x="1" y="0.8" width="12.5" height="11" fill="#fff" stroke="#323130" stroke-width="1.2"/><path d="M1 3.5H13.5" stroke="#323130" stroke-width="2"/><path d="M1 7H13.5M1 9.5H13.5M5 3.5V12M9.3 3.5V12" stroke="#323130" stroke-width="0.9"/></svg>
<svg style="left:1215px;top:272px;" width="13" height="13" viewBox="0 0 13 13"><circle cx="6.5" cy="6.5" r="6" fill="#f2c811"/><path d="M3.8 6.5L5.8 8.6L9.3 4.5" fill="none" stroke="#323130" stroke-width="1.2"/></svg>
<svg style="left:1218px;top:295px;" width="12" height="12" viewBox="0 0 12 12"><path d="M3 6L5.2 8.3L9.2 3.8" fill="none" stroke="#323130" stroke-width="1.1"/></svg>
<svg style="left:1218px;top:319px;" width="12" height="12" viewBox="0 0 12 12"><path d="M3 6L5.2 8.3L9.2 3.8" fill="none" stroke="#323130" stroke-width="1.1"/></svg>
<svg style="left:1235px;top:297px;" width="10" height="10" viewBox="0 0 10 10"><path d="M9.2 1.2H0.8L5 5L0.8 8.8H9.2" fill="none" stroke="#323130" stroke-width="1.2" stroke-linejoin="miter"/></svg>
<svg style="left:1235px;top:369px;" width="10" height="10" viewBox="0 0 10 10"><path d="M9.2 1.2H0.8L5 5L0.8 8.8H9.2" fill="none" stroke="#323130" stroke-width="1.2" stroke-linejoin="miter"/></svg>
<svg style="left:13px;top:174px;" width="16" height="16" viewBox="0 0 16 16"><path d="M1.5 1V14.5H15" fill="none" stroke="#323130" stroke-width="1.1"/><rect x="3.6" y="4.6" width="2.3" height="9.4" fill="none" stroke="#323130" stroke-width="1"/><rect x="7.9" y="6.6" width="1.9" height="7.4" fill="none" stroke="#323130" stroke-width="1"/><rect x="11.6" y="2.5" width="2.6" height="11.5" fill="none" stroke="#323130" stroke-width="1"/></svg>
<svg style="left:11px;top:212px;" width="20" height="20" viewBox="0 0 20 20"><path d="M1.3 6.6H8.3V13.6H1.3Z M1.3 10.1H8.3 M11.4 1.1H18.9V8.4H11.4Z M11.4 4.75H18.9 M11.4 11H18.9V18.8H11.4Z M11.4 14.9H18.9 M5.7 6.6V3.7H11.4 M5.7 13.6V16.2H11.4" fill="none" stroke="#605e5c" stroke-width="1.1"/></svg>
<svg style="left:506px;top:551px;" width="18" height="16" viewBox="0 0 18 16"><path d="M1 1.2H16.5L10.8 7.8V14.5H7V7.8Z" fill="none" stroke="#605e5c" stroke-width="1.1" stroke-linejoin="round"/></svg>
<svg style="left:535px;top:551px;" width="16" height="16" viewBox="0 0 16 16"><path d="M1 5.5V14.5H9.5V10 M1 5.5H5 M8 1.5H14.5V8 M14.5 1.5L8 8" fill="none" stroke="#605e5c" stroke-width="1.1"/></svg>
<svg style="left:563px;top:556px;" width="16" height="5" viewBox="0 0 16 5"><circle cx="2" cy="2.5" r="1.2" fill="#605e5c"/><circle cx="8" cy="2.5" r="1.2" fill="#605e5c"/><circle cx="14" cy="2.5" r="1.2" fill="#605e5c"/></svg>
<svg style="left:45px;top:681px;" width="8" height="12" viewBox="0 0 8 12"><path d="M6 1L1.5 5.8L6 10.6Z" fill="#c8c6c4"/></svg>
<svg style="left:67px;top:681px;" width="8" height="12" viewBox="0 0 8 12"><path d="M2 1L6.5 5.8L2 10.6Z" fill="#c8c6c4"/></svg>
<svg style="left:170px;top:681px;" width="13" height="13" viewBox="0 0 13 13"><path d="M6.3 0.8V11.8M0.8 6.3H11.8" stroke="#797775" stroke-width="2.6"/></svg>
<svg style="left:15px;top:739px;" width="18" height="18" viewBox="0 0 18 18"><path d="M0.8 2.3L7.3 1.3V8.3H0.8Z M8.3 1.1L16.8 0V8.3H8.3Z M0.8 9.3H7.3V16.3L0.8 15.3Z M8.3 9.3H16.8V17.3L8.3 16.2Z" fill="#fff"/></svg>
<svg style="left:59px;top:739px;" width="19" height="19" viewBox="0 0 19 19"><circle cx="11.7" cy="6.7" r="5.3" fill="none" stroke="#252423" stroke-width="1.2"/><path d="M7.9 10.5L1.2 17.2" stroke="#252423" stroke-width="1.3"/></svg>
<svg style="left:407px;top:739px;" width="18" height="18" viewBox="0 0 18 18"><circle cx="9" cy="9" r="6.8" fill="none" stroke="#fff" stroke-width="1.6"/></svg>
<svg style="left:455px;top:739px;" width="18" height="18" viewBox="0 0 18 18"><path d="M1.6 1V3.4H11.4V1 M1.6 16V13.6H11.4V16 M1.6 5.6H11.4V11.6H1.6Z M15.5 1V16" fill="none" stroke="#fff" stroke-width="1.3"/><rect x="14" y="5" width="3.2" height="3.2" fill="#fff"/></svg>
<svg style="left:503px;top:736px;" width="24" height="24" viewBox="0 0 24 24"><defs><linearGradient id="eg1" x1="0" y1="0" x2="1" y2="0.6"><stop offset="0" stop-color="#2fb4f0"/><stop offset="0.55" stop-color="#36c8b4"/><stop offset="1" stop-color="#5fd96a"/></linearGradient>
<linearGradient id="eg2" x1="0" y1="0" x2="0.4" y2="1"><stop offset="0" stop-color="#2a8fe8"/><stop offset="1" stop-color="#0f5fb0"/></linearGradient></defs>
<circle cx="12" cy="12" r="11.8" fill="url(#eg2)"/>
<path d="M0.5 11.5C1 5 6 0.3 12 0.3C18.5 0.3 23.7 5.3 23.7 11.5C23.7 15 21.5 17.3 18 17.3C15 17.3 13.5 15.5 14.5 13.5C15.5 11 14 7.5 10 7.5C5 7.5 1.5 10 0.5 11.5Z" fill="url(#eg1)"/>
<path d="M8 13C8 9.5 11 8.5 13 9.5C15 10.5 15 13 13.5 14C12 15 9.5 15 8 13Z" fill="#1c2a30"/>
<path d="M23.5 13C22 20 16 24 10 23.5C15 23 19 20.5 20.5 17.2C21.7 16.5 23 15 23.5 13Z" fill="#1266c2"/></svg>
<svg style="left:552px;top:738px;" width="22" height="19" viewBox="0 0 22 19"><path d="M0.5 2.5V1.5C0.5 1 1 0.5 1.5 0.5H7.5L9.5 2.5H20.5C21 2.5 21.5 3 21.5 3.5V17H0.5Z" fill="#e8b73b"/><rect x="0.5" y="3" width="21" height="14.5" fill="#f8d775"/><path d="M4.5 18V10.5H16.5V18H14V13H7V18Z" fill="#3a96dd"/></svg>
<svg style="left:600px;top:736px;" width="24" height="24" viewBox="0 0 24 24"><path d="M6.8 6V1H17.7V6" fill="none" stroke="#e8e6e4" stroke-width="1.4"/><rect x="1" y="6" width="22.8" height="18" fill="#f3f2f1"/><rect x="7.9" y="11" width="3.8" height="3.8" fill="#f25022"/><rect x="13.2" y="11" width="3.8" height="3.8" fill="#7fba00"/><rect x="7.9" y="16.1" width="3.8" height="3.8" fill="#00a4ef"/><rect x="13.2" y="16.1" width="3.8" height="3.8" fill="#ffb900"/></svg>
<svg style="left:649px;top:736px;" width="25" height="22" viewBox="0 0 25 22"><path d="M0.5 7.8L12.5 0.5L24.5 7.8V22H0.5Z" fill="#1a7fd4"/><path d="M0.5 7.8H24.5V22H0.5Z" fill="#2aa0ea"/><path d="M2.5 7.3H22.5L12.5 13.5Z" fill="#fff"/><path d="M0.5 22L12.5 12L24.5 22Z" fill="#1e88da"/></svg>
<div class="a" style="left:699px;top:735.5px;width:24px;height:24px;background:#fff;"></div>
<div class="t" style="left:704px;top:738px;font-size:16px;font-weight:700;color:#232f3e">a</div>
<svg style="left:701px;top:752px;" width="20" height="6" viewBox="0 0 20 6"><path d="M2 1.5C7 4.5 13 4.5 17.5 2" fill="none" stroke="#f90" stroke-width="1.3"/></svg>
<svg style="left:748px;top:737px;" width="24" height="22" viewBox="0 0 24 22"><path d="M6 0.5L12 4.5L6 8.5L0 4.5Z M18 0.5L24 4.5L18 8.5L12 4.5Z M6 8.5L12 12.5L6 16.5L0 12.5Z M18 8.5L24 12.5L18 16.5L12 12.5Z M12 13.5L18 17.5L12 21.5L6 17.5Z" fill="#fff"/></svg>
<svg style="left:802px;top:735px;" width="14" height="24" viewBox="0 0 14 24"><path d="M9.5 0.5L3 8L10.5 15L2 23.5L5 15.5L0 10L8.5 4.5Z" fill="#fff"/></svg>
<svg style="left:846px;top:736px;" width="23" height="24" viewBox="0 0 23 24"><path d="M15.5 1H21V6.5M1 17.5V22.5H6.5" fill="none" stroke="#3aa64a" stroke-width="1.8"/><path d="M2.5 3.5C2.5 1.5 11.5 1.5 11.5 3.5V15C11.5 17 2.5 17 2.5 15Z" fill="#f4d160"/><ellipse cx="7" cy="3.5" rx="4.5" ry="1.8" fill="#e2b043"/><path d="M9.5 13L19 21.5M19 13L9.5 21.5" stroke="#1f88e5" stroke-width="2"/></svg>
<svg style="left:895px;top:736px;" width="24" height="24" viewBox="0 0 24 24"><circle cx="12" cy="12" r="11" fill="#34a853"/><path d="M12 12L2.5 6.5A11 11 0 0 1 21.5 6.5Z" fill="#ea4335"/><path d="M12 12L21.5 6.5A11 11 0 0 1 12 23Z" fill="#fbbc04"/><circle cx="12" cy="12" r="5" fill="#fff"/><circle cx="12" cy="12" r="3.9" fill="#4285f4"/></svg>
<svg style="left:945px;top:735px;" width="21" height="26" viewBox="0 0 21 26"><rect x="10.8" y="1" width="9.5" height="24" rx="0.8" fill="#e6ad10"/><rect x="5.8" y="7" width="9.5" height="18" rx="0.8" fill="#f2c811"/><rect x="0.8" y="13" width="9.5" height="12" rx="0.8" fill="#f9dd6b"/></svg>
<svg style="left:995px;top:735px;" width="20" height="26" viewBox="0 0 20 26"><defs><linearGradient id="pd" x1="0" y1="0" x2="0.3" y2="1"><stop offset="0" stop-color="#ffc83d"/><stop offset="0.3" stop-color="#e74f8c"/><stop offset="0.6" stop-color="#8b5fc6"/><stop offset="1" stop-color="#1ea4e9"/></linearGradient></defs><path d="M10 0.5C8 5 1 11 1 16.5A9 9 0 0 0 19 16.5C19 11 12 5 10 0.5Z" fill="url(#pd)"/></svg>
<svg style="left:1092px;top:743px;" width="14" height="10" viewBox="0 0 14 10"><path d="M1 8L7 2L13 8" fill="none" stroke="#fff" stroke-width="1.2"/></svg>
<svg style="left:1114px;top:741px;" width="18" height="12" viewBox="0 0 18 12"><path d="M4 11.5H15.5A3 3 0 0 0 15.8 5.5A4.8 4.8 0 0 0 6.5 4.5A3.6 3.6 0 0 0 4 11.5Z" fill="#e6e6e6"/></svg>
<svg style="left:1139px;top:741px;" width="17" height="13" viewBox="0 0 17 13"><path d="M1.5 1V4M3.5 1V4M0.8 4H4.3V5.5L2.5 7.5V12" fill="none" stroke="#fff" stroke-width="1"/><rect x="5.2" y="3.5" width="10" height="7.8" fill="none" stroke="#fff" stroke-width="1"/><rect x="6.5" y="4.8" width="7.3" height="5.2" fill="#fff"/><rect x="15.2" y="5.5" width="1.5" height="3.8" fill="#fff"/></svg>
<svg style="left:1165px;top:740px;" width="15" height="15" viewBox="0 0 15 15"><path d="M1 13.5A12.5 12.5 0 0 1 13.5 1M3.8 13.5A9.7 9.7 0 0 1 13.5 3.8M6.6 13.5A6.9 6.9 0 0 1 13.5 6.6M9.4 13.5A4.1 4.1 0 0 1 13.5 9.4" fill="none" stroke="#fff" stroke-width="1"/><circle cx="12.5" cy="12.8" r="1.5" fill="#fff"/></svg>
<svg style="left:1187px;top:740px;" width="17" height="15" viewBox="0 0 17 15"><path d="M1 5H4.5L9 1V14L4.5 10H1Z" fill="none" stroke="#fff" stroke-width="1"/><path d="M11 5.5A2.8 2.8 0 0 1 11 9.5M12.8 3.5A5.5 5.5 0 0 1 12.8 11.5M14.8 1.2A8.5 8.5 0 0 1 14.8 13.8" fill="none" stroke="#fff" stroke-width="1"/></svg>
<svg style="left:1324px;top:739px;" width="26" height="26" viewBox="0 0 26 26"><path d="M1 1H17V12H7L4 15V12H1Z" fill="#fff"/><path d="M3.5 3.8H14.5M3.5 6.3H14.5M3.5 8.8H12" stroke="#1c2a30" stroke-width="1"/><circle cx="15.7" cy="17" r="7.2" fill="#3b4449" stroke="#848a8d" stroke-width="1.4"/></svg>
<div class="t" style="left:1330px;top:751px;width:20px;text-align:center;font-size:11px;font-weight:700;color:#fff">1</div>
<div class="a" style="left:1362px;top:728px;width:1px;height:40px;background:#5d6669;"></div>
</body></html>
